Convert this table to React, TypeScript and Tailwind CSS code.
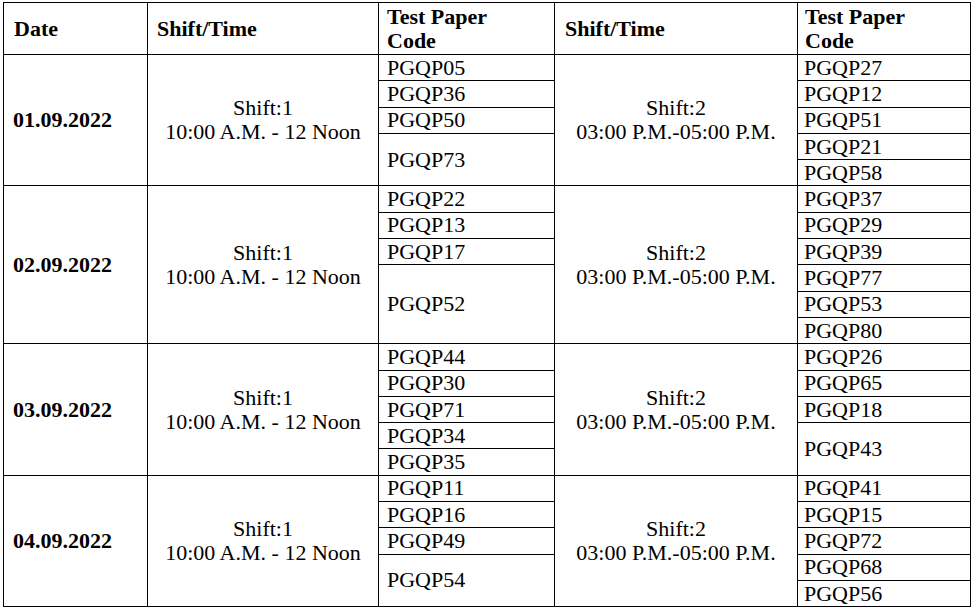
import React from "react";

type Code = { c: string; span: number };
type Group = { date: string; rows: number; left: Code[]; right: Code[] };

const mk = (arr: (string | [string, number])[]): Code[] =>
  arr.map((a) => (Array.isArray(a) ? { c: a[0], span: a[1] } : { c: a, span: 1 }));

const groups: Group[] = [
  {
    date: "01.09.2022",
    rows: 5,
    left: mk(["PGQP05", "PGQP36", "PGQP50", ["PGQP73", 2]]),
    right: mk(["PGQP27", "PGQP12", "PGQP51", "PGQP21", "PGQP58"]),
  },
  {
    date: "02.09.2022",
    rows: 6,
    left: mk(["PGQP22", "PGQP13", "PGQP17", ["PGQP52", 3]]),
    right: mk(["PGQP37", "PGQP29", "PGQP39", "PGQP77", "PGQP53", "PGQP80"]),
  },
  {
    date: "03.09.2022",
    rows: 5,
    left: mk(["PGQP44", "PGQP30", "PGQP71", "PGQP34", "PGQP35"]),
    right: mk(["PGQP26", "PGQP65", "PGQP18", ["PGQP43", 2]]),
  },
  {
    date: "04.09.2022",
    rows: 5,
    left: mk(["PGQP11", "PGQP16", "PGQP49", ["PGQP54", 2]]),
    right: mk(["PGQP41", "PGQP15", "PGQP72", "PGQP68", "PGQP56"]),
  },
];

const startsAt = (codes: Code[], i: number): Code | undefined => {
  let r = 0;
  for (const c of codes) {
    if (r === i) return c;
    r += c.span;
  }
  return undefined;
};

const cell = "border border-black p-0 align-middle";

export default function App() {
  return (
    <div
      className="w-[971px] h-[610px] bg-white text-black overflow-hidden pt-[2px] pl-[3px]"
      style={{ fontFamily: '"Liberation Serif", "Times New Roman", serif' }}
    >
      <table className="table-fixed border-collapse w-[967px] text-[22px] leading-[24px]">
        <colgroup>
          <col className="w-[144px]" />
          <col className="w-[231px]" />
          <col className="w-[176px]" />
          <col className="w-[243px]" />
          <col className="w-[173px]" />
        </colgroup>
        <tbody>
          <tr className="h-[52px] font-bold">
            <td className={`${cell} pl-[10px]`}>Date</td>
            <td className={`${cell} pl-[9px]`}>Shift/Time</td>
            <td className={`${cell} pl-[8px]`}>
              Test Paper
              <br />
              Code
            </td>
            <td className={`${cell} pl-[10px]`}>Shift/Time</td>
            <td className={`${cell} pl-[7px]`}>
              Test Paper
              <br />
              Code
            </td>
          </tr>
          {groups.map((g) =>
            Array.from({ length: g.rows }).map((_, i) => {
              const l = startsAt(g.left, i);
              const r = startsAt(g.right, i);
              return (
                <tr key={g.date + i} className="h-[26.3px]">
                  {i === 0 && (
                    <td rowSpan={g.rows} className={`${cell} pl-[9px] font-bold`}>
                      {g.date}
                    </td>
                  )}
                  {i === 0 && (
                    <td rowSpan={g.rows} className={`${cell} text-center`}>
                      Shift:1
                      <br />
                      10:00 A.M. - 12 Noon
                    </td>
                  )}
                  {l && (
                    <td rowSpan={l.span} className={`${cell} pl-[8px]`}>
                      {l.c}
                    </td>
                  )}
                  {i === 0 && (
                    <td rowSpan={g.rows} className={`${cell} text-center`}>
                      Shift:2
                      <br />
                      03:00 P.M.-05:00 P.M.
                    </td>
                  )}
                  {r && (
                    <td rowSpan={r.span} className={`${cell} pl-[6px]`}>
                      {r.c}
                    </td>
                  )}
                </tr>
              );
            })
          )}
        </tbody>
      </table>
    </div>
  );
}
